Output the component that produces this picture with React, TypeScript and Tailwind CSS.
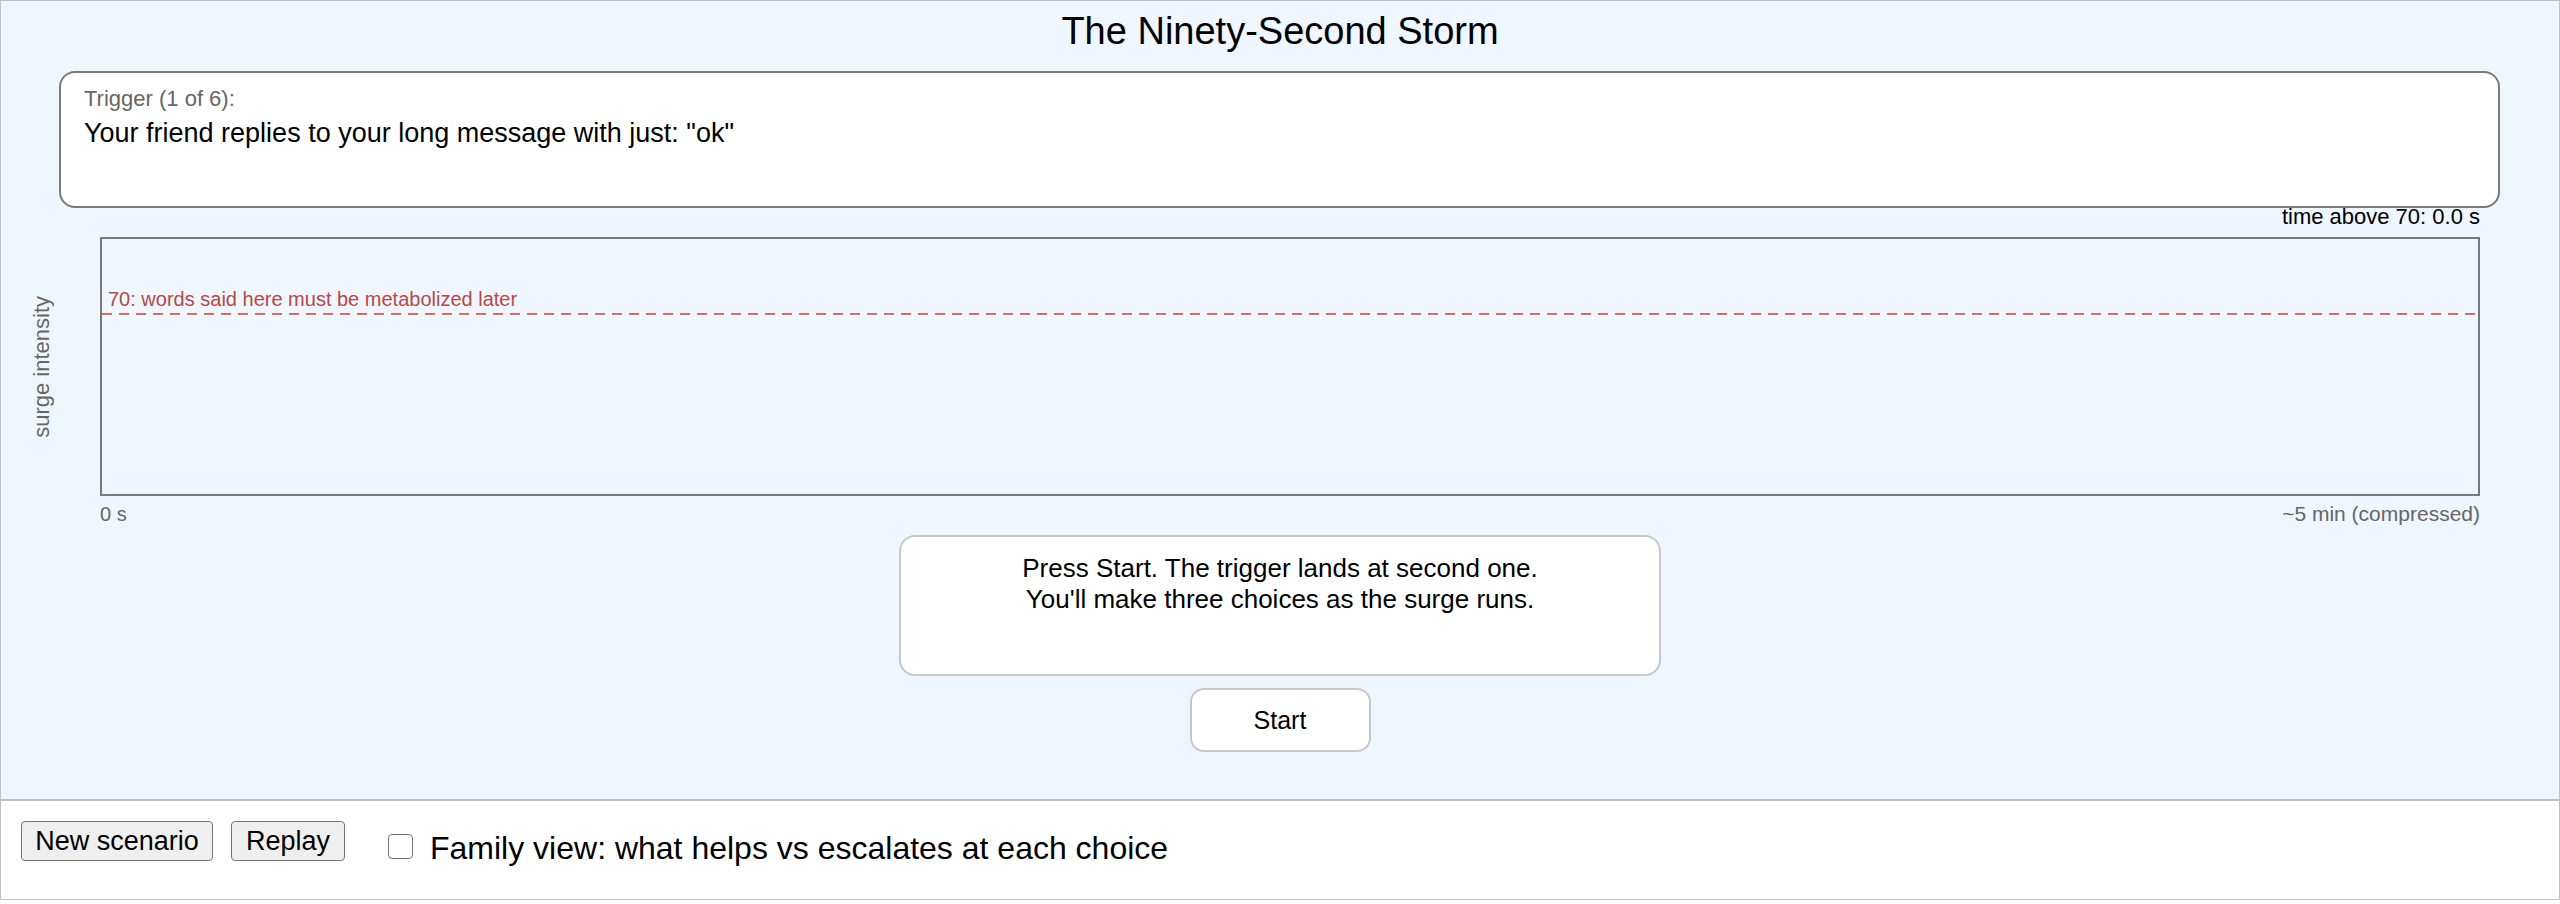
import React from "react";

// surge chart: empty until Start is pressed, only the 70 threshold is drawn
function SurgeChart() {
    return (
        <div className="flex h-[259px]">
            <div className="w-[99px] pl-[28px] flex items-center">
                <span className="text-[22px] leading-[26px] text-[#666] [writing-mode:vertical-rl] rotate-180 whitespace-nowrap">
                    surge intensity
                </span>
            </div>
            <div className="w-[2380px] h-[259px] border-2 border-[#7a7a7a]">
                <svg width="2376" height="255" className="block">
                    <line x1="0" y1="75" x2="2376" y2="75" stroke="#cf6f6f" strokeWidth="2" strokeDasharray="10 7" />
                    <text x="6" y="67" fontSize="20" fill="#b34a4a" fontFamily="Liberation Sans, Arial, sans-serif">
                        70: words said here must be metabolized later
                    </text>
                </svg>
            </div>
        </div>
    );
}

export default function App() {
    return (
        <div className="w-[2560px] h-[904px] bg-white text-black font-['Liberation_Sans',Arial,sans-serif]">
            <div className="w-[2560px] h-[900px] border border-[#c0c0c0] flex flex-col">
                <main className="h-[800px] shrink-0 bg-[#eff6ff] border-b-2 border-[#c0c0c0] flex flex-col">
                    <h1 className="text-[38px] leading-[44px] text-center mt-[8px]">The Ninety-Second Storm</h1>

                    <div className="mt-[18px] ml-[58px] w-[2441px] h-[137px] bg-white border-2 border-[#7a7a7a] rounded-[16px] pt-[12px] pl-[23px]">
                        <div className="text-[22px] leading-[28px] text-[#666]">Trigger (1 of 6):</div>
                        <div className="mt-[3px] text-[27px] leading-[34px]">Your friend replies to your long message with just: "ok"</div>
                    </div>

                    <div className="w-[2479px] h-[29px] flex justify-end items-start">
                        <span className="text-[22px] leading-[17px]">time above 70: 0.0 s</span>
                    </div>

                    <SurgeChart />

                    <div className="mt-[6px] ml-[99px] w-[2380px] flex justify-between items-start text-[20px] leading-[24px] text-[#666]">
                        <span>0 s</span>
                        <span className="text-[21px]">~5 min (compressed)</span>
                    </div>

                    <div className="mt-[9px] self-center w-[762px] h-[141px] bg-white border-2 border-[#c8c8c8] rounded-[16px] pt-[16px] text-center text-[26px] leading-[31px]">
                        <div>Press Start. The trigger lands at second one.</div>
                        <div>You'll make three choices as the surge runs.</div>
                    </div>

                    <button className="mt-[12px] self-center w-[181px] h-[64px] bg-white border-2 border-[#c8c8c8] rounded-[14px] text-[25px] leading-[28px]">
                        Start
                    </button>
                </main>

                <div className="h-[98px] shrink-0 bg-white flex items-start pt-[20px] pl-[20px]">
                    <button className="w-[192px] h-[40px] bg-[#efefef] border-[1.5px] border-[#767676] rounded-[4px] text-[27px] leading-[30px]">
                        New scenario
                    </button>
                    <button className="ml-[18px] w-[114px] h-[40px] bg-[#efefef] border-[1.5px] border-[#767676] rounded-[4px] text-[27px] leading-[30px]">
                        Replay
                    </button>
                    <label className="flex items-start">
                        <input
                            type="checkbox"
                            className="appearance-none ml-[43px] mt-[13px] w-[25px] h-[25px] bg-white border-[1.5px] border-[#767676] rounded-[4px]"
                        />
                        <span className="ml-[17px] mt-[9px] text-[32px] leading-[37px]">
                            Family view: what helps vs escalates at each choice
                        </span>
                    </label>
                </div>
            </div>
        </div>
    );
}
